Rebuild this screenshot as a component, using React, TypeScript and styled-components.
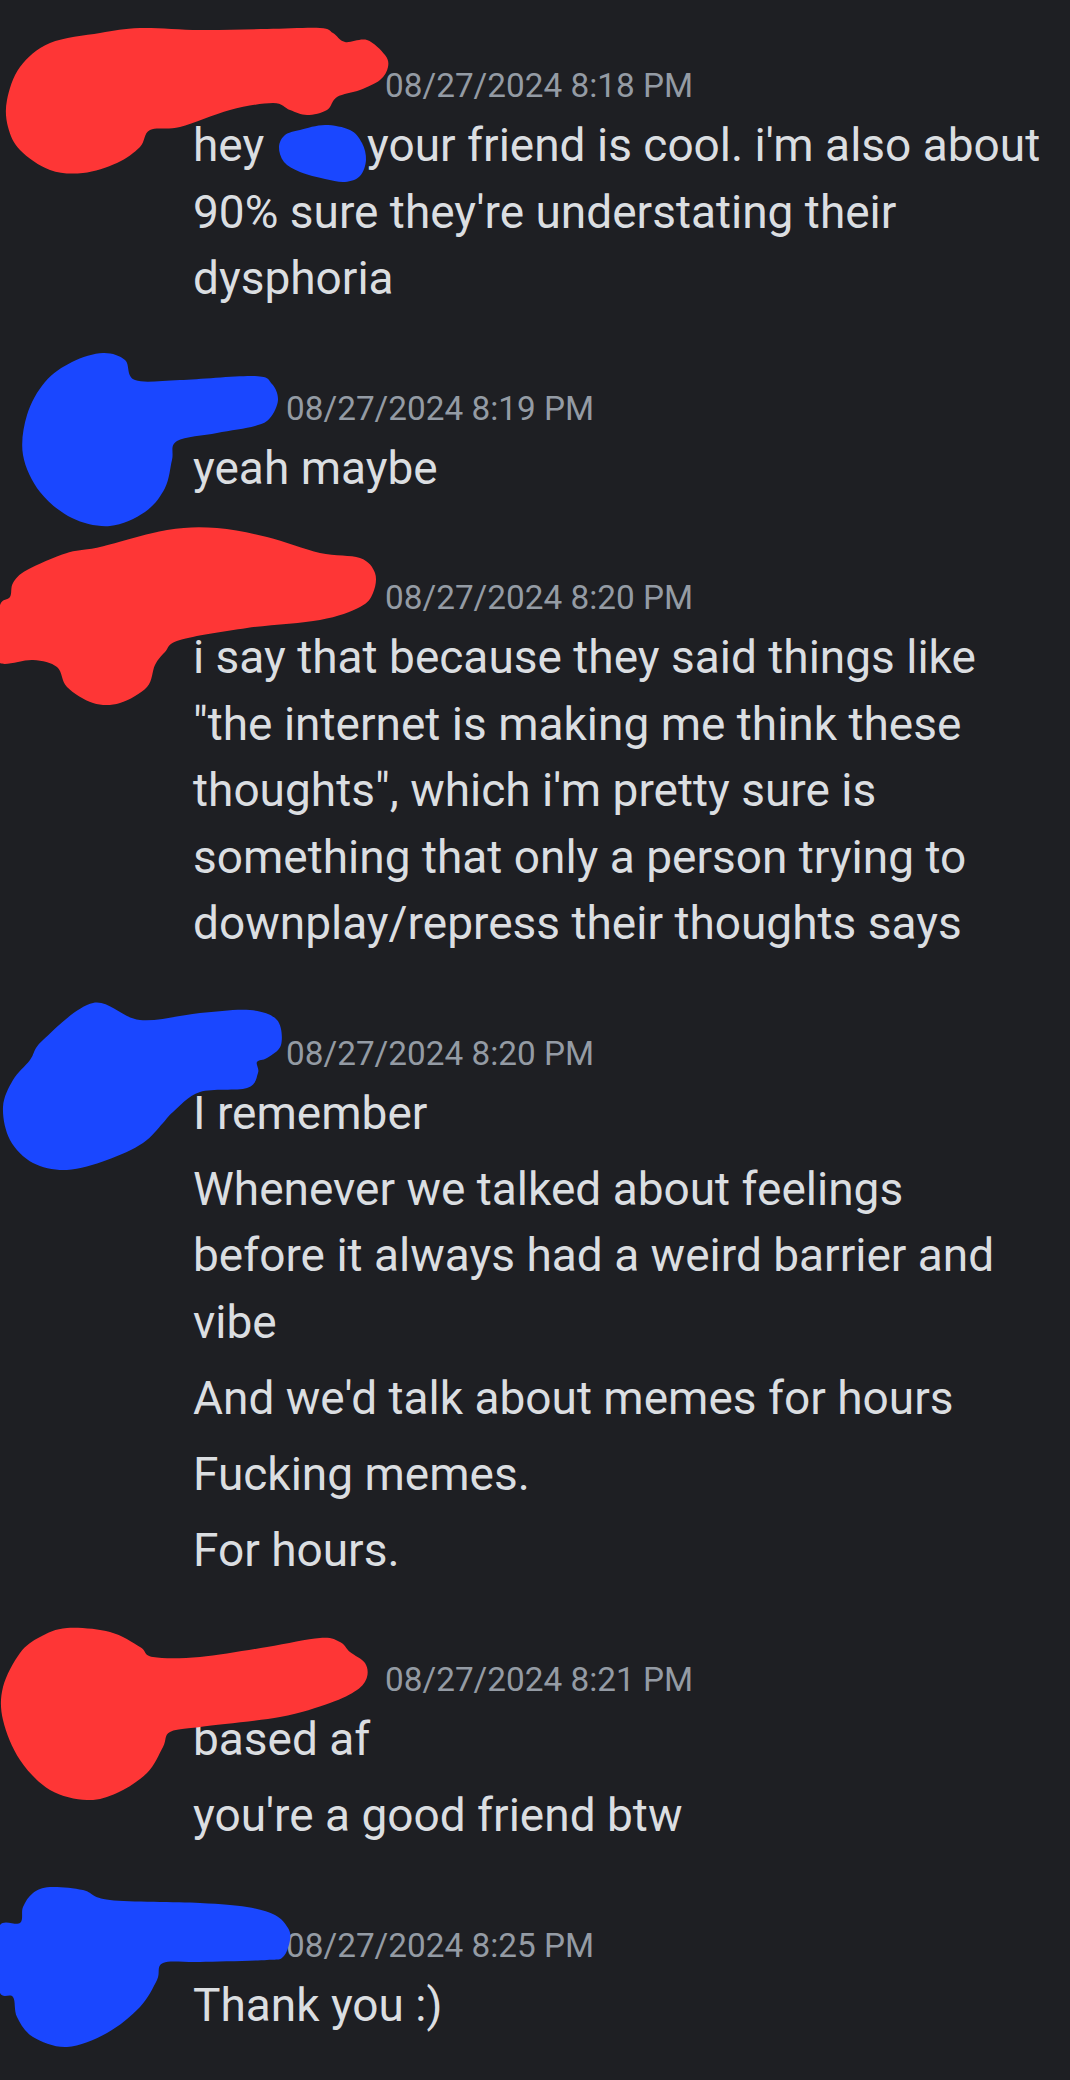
import React from 'react';
import styled, { createGlobalStyle } from 'styled-components';

const GlobalStyle = createGlobalStyle`
  html, body {
    margin: 0;
    padding: 0;
    background: #1e1f23;
    overflow: hidden;
  }
  #root { width: 1070px; }
`;

const Page = styled.main`
  position: relative;
  box-sizing: border-box;
  width: 1070px;
  height: 2080px;
  padding: 59px 0 0 40px;
  background: #1e1f23;
  display: flex;
  flex-direction: column;
  gap: 70px;
  font-family: Roboto, "Noto Sans", sans-serif;
  overflow: hidden;
`;

const Group = styled.section`
  display: flex;
  align-items: flex-start;
  gap: 53px;
`;

const Avatar = styled.div`
  flex: none;
  width: 100px;
  height: 100px;
  border-radius: 50%;
  background: #222328;
`;

const Content = styled.div`
  display: flex;
  flex-direction: column;
`;

const Header = styled.div`
  display: flex;
  align-items: center;
  gap: 10px;
  height: 53px;
`;

const Name = styled.span<{ $w: number }>`
  flex: none;
  display: block;
  width: ${(p) => p.$w}px;
  height: 40px;
`;

const Time = styled.time`
  font-size: 33.3px;
  line-height: 53px;
  color: #949ba4;
  white-space: nowrap;
`;

const Body = styled.div`
  display: flex;
  flex-direction: column;
  gap: 9.5px;
`;

const Msg = styled.p`
  margin: 0;
  font-size: 46px;
  line-height: 66.5px;
  color: #dbdee1;
  white-space: pre;
`;

const Hidden = styled.span`
  display: inline-block;
  width: 80px;
`;

const Redactions = styled.svg`
  position: absolute;
  left: 0;
  top: 0;
  width: 1070px;
  height: 2080px;
  pointer-events: none;
`;

type Pt = [number, number];

function smooth(pts: Pt[]): string {
  const n = pts.length;
  let d = `M${pts[0][0]},${pts[0][1]}`;
  for (let i = 0; i < n; i++) {
    const p0 = pts[(i - 1 + n) % n];
    const p1 = pts[i];
    const p2 = pts[(i + 1) % n];
    const p3 = pts[(i + 2) % n];
    const c1x = p1[0] + (p2[0] - p0[0]) / 6;
    const c1y = p1[1] + (p2[1] - p0[1]) / 6;
    const c2x = p2[0] - (p3[0] - p1[0]) / 6;
    const c2y = p2[1] - (p3[1] - p1[1]) / 6;
    d += ` C${c1x.toFixed(1)},${c1y.toFixed(1)} ${c2x.toFixed(1)},${c2y.toFixed(1)} ${p2[0]},${p2[1]}`;
  }
  return d + ' Z';
}

const RED = '#fe3636';
const BLUE = '#1a47ff';

const marks: { color: string; pts: Pt[] }[] = [
  {
    color: RED,
    pts: [[7,100],[20,67],[50,43],[100,33],[140,28],[200,30],[267,29],[320,28],[333,33],[345,42],[367,40],[385,55],[388,67],[380,80],[360,90],[337,97],[327,110],[307,115],[290,110],[273,103],[230,110],[180,127],[150,130],[140,147],[117,163],[83,173],[50,170],[20,150],[8,127]],
  },
  {
    color: BLUE,
    pts: [[300,130],[325,125],[350,130],[362,143],[366,160],[360,176],[345,182],[325,179],[300,172],[284,162],[279,147],[285,135]],
  },
  {
    color: BLUE,
    pts: [[103,353],[125,360],[135,380],[180,380],[255,376],[272,384],[278,400],[270,418],[255,426],[217,433],[177,441],[172,460],[165,488],[145,512],[110,526],[72,518],[40,492],[23,455],[27,415],[45,382],[72,362]],
  },
  {
    color: RED,
    pts: [[13,583],[27,570],[67,553],[100,547],[167,530],[217,528],[267,537],[320,553],[360,558],[375,573],[373,593],[360,607],[320,620],[247,628],[180,640],[165,652],[155,665],[147,687],[120,703],[93,703],[67,687],[57,667],[33,660],[0,663],[-5,640],[0,605],[10,597]],
  },
  {
    color: BLUE,
    pts: [[43,1040],[93,1003],[140,1020],[200,1013],[250,1010],[277,1020],[281,1045],[267,1058],[257,1062],[258,1073],[247,1088],[200,1092],[173,1112],[163,1123],[143,1143],[107,1160],[67,1170],[33,1163],[10,1140],[3,1107],[13,1080],[30,1060]],
  },
  {
    color: RED,
    pts: [[67,1628],[110,1632],[140,1647],[153,1657],[200,1657],[267,1647],[320,1638],[340,1642],[350,1652],[365,1663],[367,1677],[357,1690],[330,1703],[280,1717],[200,1727],[170,1732],[163,1747],[147,1773],[117,1793],[87,1800],[50,1790],[20,1760],[3,1720],[3,1687],[20,1653],[40,1637]],
  },
  {
    color: BLUE,
    pts: [[50,1887],[83,1890],[110,1900],[200,1903],[247,1907],[275,1915],[288,1928],[290,1940],[283,1957],[267,1960],[200,1962],[163,1963],[157,1980],[140,2007],[107,2033],[67,2047],[33,2037],[17,2017],[13,1997],[0,1993],[-5,1960],[0,1925],[20,1923],[23,1907],[33,1893]],
  },
];

type User = 'red' | 'blue';
const nameWidth: Record<User, number> = { red: 182, blue: 83 };

const groups: { user: User; time: string; messages: React.ReactNode[] }[] = [
  {
    user: 'red',
    time: '08/27/2024 8:18 PM',
    messages: [
      <>
        {'hey '}
        <Hidden />
        {" your friend is cool. i'm also about\n90% sure they're understating their\ndysphoria"}
      </>,
    ],
  },
  { user: 'blue', time: '08/27/2024 8:19 PM', messages: ['yeah maybe'] },
  {
    user: 'red',
    time: '08/27/2024 8:20 PM',
    messages: [
      'i say that because they said things like\n"the internet is making me think these\nthoughts", which i\'m pretty sure is\nsomething that only a person trying to\ndownplay/repress their thoughts says',
    ],
  },
  {
    user: 'blue',
    time: '08/27/2024 8:20 PM',
    messages: [
      'I remember',
      'Whenever we talked about feelings\nbefore it always had a weird barrier and\nvibe',
      "And we'd talk about memes for hours",
      'Fucking memes.',
      'For hours.',
    ],
  },
  {
    user: 'red',
    time: '08/27/2024 8:21 PM',
    messages: ['based af', "you're a good friend btw"],
  },
  { user: 'blue', time: '08/27/2024 8:25 PM', messages: ['Thank you :)'] },
];

export default function App() {
  return (
    <>
      <GlobalStyle />
      <Page>
        {groups.map((g, i) => (
          <Group key={i}>
            <Avatar />
            <Content>
              <Header>
                <Name $w={nameWidth[g.user]} />
                <Time>{g.time}</Time>
              </Header>
              <Body>
                {g.messages.map((m, j) => (
                  <Msg key={j}>{m}</Msg>
                ))}
              </Body>
            </Content>
          </Group>
        ))}
        <Redactions viewBox="0 0 1070 2080" aria-hidden="true">
          {marks.map((m, i) => (
            <path key={i} d={smooth(m.pts)} fill={m.color} />
          ))}
        </Redactions>
      </Page>
    </>
  );
}
